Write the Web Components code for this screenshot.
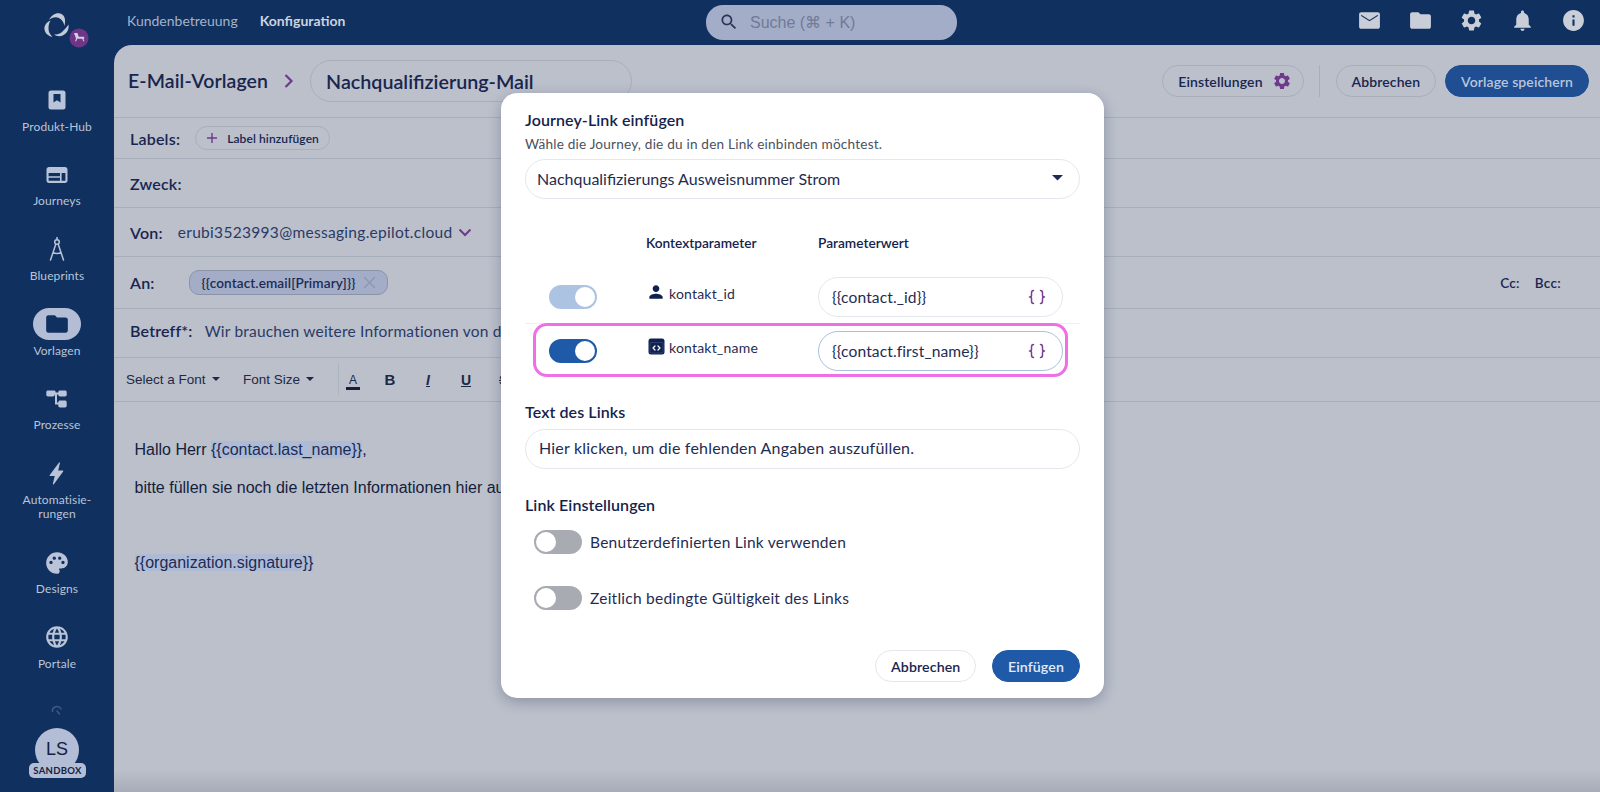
<!DOCTYPE html>
<html lang="de">
<head>
<meta charset="utf-8">
<title>E-Mail-Vorlagen</title>
<style>
  html, body { margin: 0; height: 100%; overflow: hidden; background: #10305f; }
  body { font-family: Lato, "Open Sans", sans-serif; color: #18264f; }
</style>
</head>
<body>
<app-shell></app-shell>

<script>
// material style icon paths, all on a 24 box
const ICONS = {
  mail: 'M20 4H4c-1.1 0-2 .9-2 2v12c0 1.1.9 2 2 2h16c1.1 0 2-.9 2-2V6c0-1.1-.9-2-2-2zm0 3.6l-8 5-8-5V6.4l8 5 8-5v1.2z',
  folder: 'M10 4H4c-1.1 0-1.99.9-1.99 2L2 18c0 1.1.9 2 2 2h16c1.1 0 2-.9 2-2V8c0-1.1-.9-2-2-2h-8l-2-2z',
  gear: 'M19.14 12.94c.04-.3.06-.61.06-.94 0-.32-.02-.64-.07-.94l2.03-1.58c.18-.14.23-.41.12-.61l-1.92-3.32c-.12-.22-.37-.29-.59-.22l-2.39.96c-.5-.38-1.03-.7-1.62-.94l-.36-2.54c-.04-.24-.24-.41-.48-.41h-3.84c-.24 0-.43.17-.47.41l-.36 2.54c-.59.24-1.13.57-1.62.94l-2.39-.96c-.22-.08-.47 0-.59.22L2.74 8.87c-.12.21-.08.47.12.61l2.03 1.58c-.05.3-.09.63-.09.94s.02.64.07.94l-2.03 1.58c-.18.14-.23.41-.12.61l1.92 3.32c.12.22.37.29.59.22l2.39-.96c.5.38 1.03.7 1.62.94l.36 2.54c.05.24.24.41.48.41h3.84c.24 0 .44-.17.47-.41l.36-2.54c.59-.24 1.13-.56 1.62-.94l2.39.96c.22.08.47 0 .59-.22l1.92-3.32c.12-.22.07-.47-.12-.61l-2.01-1.58zM12 15.6c-1.98 0-3.6-1.62-3.6-3.6s1.62-3.6 3.6-3.6 3.6 1.62 3.6 3.6-1.62 3.6-3.6 3.6z',
  bell: 'M12 22c1.1 0 2-.9 2-2h-4c0 1.1.9 2 2 2zm6-6v-5c0-3.07-1.63-5.64-4.5-6.32V4c0-.83-.67-1.5-1.5-1.5s-1.5.67-1.5 1.5v.68C7.64 5.36 6 7.92 6 11v5l-2 2v1h16v-1l-2-2z',
  info: 'M12 2C6.48 2 2 6.48 2 12s4.48 10 10 10 10-4.48 10-10S17.52 2 12 2zm1 15h-2v-6h2v6zm0-8h-2V7h2v2z',
  search: 'M15.5 14h-.79l-.28-.27C15.41 12.59 16 11.11 16 9.5 16 5.91 13.09 3 9.5 3S3 5.91 3 9.5 5.91 16 9.5 16c1.61 0 3.09-.59 4.23-1.57l.27.28v.79l5 4.99L20.49 19l-4.99-5zm-6 0C7.01 14 5 11.99 5 9.5S7.01 5 9.5 5 14 7.01 14 9.5 11.99 14 9.5 14z',
  person: 'M12 12c2.21 0 4-1.79 4-4s-1.79-4-4-4-4 1.79-4 4 1.79 4 4 4zm0 2c-2.67 0-8 1.34-8 4v2h16v-2c0-2.66-5.33-4-8-4z',
  palette: 'M12 2C6.49 2 2 6.49 2 12s4.49 10 10 10c1.38 0 2.5-1.12 2.5-2.5 0-.61-.23-1.2-.64-1.67-.08-.1-.13-.21-.13-.33 0-.28.22-.5.5-.5H16c3.31 0 6-2.69 6-6 0-4.96-4.49-9-10-9zm5.5 11c-.83 0-1.5-.67-1.5-1.5s.67-1.5 1.5-1.5 1.5.67 1.5 1.5-.67 1.5-1.5 1.5zm-3-4c-.83 0-1.5-.67-1.5-1.5S13.67 6 14.5 6s1.5.67 1.5 1.5S15.33 9 14.5 9zM5 11.5c0-.83.67-1.5 1.5-1.5s1.5.67 1.5 1.5S7.33 13 6.5 13 5 12.33 5 11.5zm6-4c0 .83-.67 1.5-1.5 1.5S8 8.33 8 7.5 8.67 6 9.5 6s1.5.67 1.5 1.5z',
  globe: 'M11.99 2C6.47 2 2 6.48 2 12s4.47 10 9.99 10C17.52 22 22 17.52 22 12S17.52 2 11.99 2zm6.93 6h-2.95c-.32-1.25-.78-2.45-1.38-3.56 1.84.63 3.37 1.91 4.33 3.56zM12 4.04c.83 1.2 1.48 2.53 1.91 3.96h-3.82c.43-1.43 1.08-2.76 1.91-3.96zM4.26 14C4.1 13.36 4 12.69 4 12s.1-1.36.26-2h3.38c-.08.66-.14 1.32-.14 2s.06 1.34.14 2H4.26zm.82 2h2.95c.32 1.25.78 2.45 1.38 3.56-1.84-.63-3.37-1.9-4.33-3.56zm2.95-8H5.08c.96-1.66 2.49-2.93 4.33-3.56C8.81 5.55 8.35 6.75 8.03 8zM12 19.96c-.83-1.2-1.48-2.53-1.91-3.96h3.82c-.43 1.43-1.08 2.76-1.91 3.96zM14.34 14H9.66c-.09-.66-.16-1.32-.16-2s.07-1.35.16-2h4.68c.09.65.16 1.32.16 2s-.07 1.34-.16 2zm.25 5.56c.6-1.11 1.06-2.31 1.38-3.56h2.95c-.96 1.65-2.49 2.93-4.33 3.56zM16.36 14c.08-.66.14-1.32.14-2s-.06-1.34-.14-2h3.38c.16.64.26 1.31.26 2s-.1 1.36-.26 2h-3.38z',
  book: 'M6 2.5h12a2.5 2.5 0 0 1 2.5 2.5v14a2.5 2.5 0 0 1-2.5 2.5H6A2.5 2.5 0 0 1 3.500 19V5A2.500 2.500 0 0 1 6 2.500zM8.500 6v8.500l3.500-2.300 3.500 2.300V6z',
  web: 'M4 4h16c1.400 0 2.500 1.100 2.500 2.500v11c0 1.400-1.100 2.500-2.500 2.500H4c-1.400 0-2.500-1.100-2.500-2.500v-11C1.500 5.100 2.600 4 4 4zm-.400 6v3.200h11.400V10zm0 4.700v3.100h11.400v-3.100zM16.600 10v7.800h3.800V10z',
  flow: 'M3 3.500h6c1 0 1.700.700 1.700 1.700v.300h2.600V5.200c0-1 .700-1.700 1.700-1.700h5c1 0 1.700.700 1.700 1.700v2.600c0 1-.700 1.700-1.700 1.700h-5c-1 0-1.700-.700-1.700-1.700V7.500h-1.300v8h1.300v-.300c0-1 .700-1.700 1.700-1.700h5c1 0 1.700.700 1.700 1.700v3.600c0 1-.700 1.700-1.700 1.700h-5c-1 0-1.700-.700-1.700-1.700v-1.300h-3.300V7.500h-.300v.300c0 1-.700 1.700-1.700 1.700H3c-1 0-1.700-.700-1.700-1.700V5.200c0-1 .700-1.700 1.700-1.700z',
  bolt: 'M14.500 1.500 5.500 13.500c-.300.500 0 1 .500 1h4.300l-1.800 7.300c-.200.700.500 1 .900.500l9-12.300c.300-.500 0-1-.500-1h-4.300l1.700-7c.200-.700-.500-1-.800-.500z'
}

function icon(name, size, color) {
  return `<svg width="${size}" height="${size}" viewBox="0 0 24 24" fill="${color || 'currentColor'}" fill-rule="evenodd" aria-hidden="true"><path d="${ICONS[name]}"/></svg>`
}

const compass = `<svg width="24" height="24" viewBox="0 0 24 24" fill="none" stroke="currentColor" stroke-width="1.500" stroke-linecap="round" aria-hidden="true"><path d="M12 .5v2"/><circle cx="12" cy="5" r="2.300"/><path d="M10.700 7.500 5.500 23M13.300 7.500 18.500 23M8 15.500c2.400 1.200 5.600 1.200 8 0"/></svg>`
const braces = `<svg width="18" height="16" viewBox="0 0 18 16" fill="none" stroke="#7b3f96" stroke-width="1.500" stroke-linecap="round" stroke-linejoin="round" aria-hidden="true"><path d="M5.500 1.500C3.500 1.500 3.500 2.500 3.500 4v2.500c0 .8-.6 1.500-2 1.500 1.400 0 2 .7 2 1.500V12c0 1.500 0 2.500 2 2.500M12.500 1.500c2 0 2 1 2 2.500v2.500c0 .8.600 1.500 2 1.500-1.400 0-2 .7-2 1.500V12c0 1.500 0 2.500-2 2.500"/></svg>`
const codebox = `<svg width="17" height="17" viewBox="0 0 17 17" aria-hidden="true"><rect x=".5" y=".5" width="16" height="16" rx="2.500" fill="#0f2150"/><rect x="2" y="4.500" width="13" height="10.500" rx="1" fill="#0f2150" stroke="#fff" stroke-width=".4" stroke-opacity=".35"/><path d="M7 8 5 10l2 2M10 8l2 2-2 2" fill="none" stroke="#fff" stroke-width="1.200" stroke-linecap="round" stroke-linejoin="round"/></svg>`
const caret = (c, w) => `<svg width="${w}" height="${w / 2}" viewBox="0 0 10 5" aria-hidden="true"><path d="M0 0h10L5 5z" fill="${c}"/></svg>`

class NavItem extends HTMLElement {
  constructor() {
    super()
    this.attachShadow({mode: 'open'}).innerHTML = `
    <style>
      :host { display: flex; flex-direction: column; align-items: center; color: #b9c4d8; }
      .ic { width: 48px; height: 32px; border-radius: 16px; display: flex; align-items: center; justify-content: center; }
      :host([active]) .ic { background: #b3bdd6; color: #10305f; }
      .lb { margin-top: 3.5px; font-size: 12px; line-height: 14.5px; letter-spacing: .1px; text-align: center; white-space: pre-line; }
    </style>
    <div class="ic"><slot></slot></div>
    <div class="lb">${this.getAttribute('label')}</div>`
  }
}
customElements.define('nav-item', NavItem)

class SideBar extends HTMLElement {
  constructor() {
    super()
    this.attachShadow({mode: 'open'}).innerHTML = `
    <style>
      :host { display: flex; flex-direction: column; align-items: center; width: 114px; flex: none; background: #10305f; box-sizing: border-box; height: 792px; }
      .logo { height: 84px; width: 100%; display: flex; justify-content: center; flex: none; }
      .logo svg { margin-top: 12px; }
      nav { display: flex; flex-direction: column; gap: 24.700px; align-items: center; }
      .spin { margin-top: auto; height: 12px; margin-bottom: 15px; }
      .who { position: relative; width: 44px; height: 44px; margin-bottom: 20px; border-radius: 50%; background: #b3bdd6; color: #14213f; font: 400 18px/42px "Liberation Sans", sans-serif; text-align: center; flex: none; }
      .tag { position: absolute; left: -6px; top: 35px; width: 57px; height: 15px; border-radius: 5px; background: #b3bdd6; font: 700 9.500px/15px Lato, sans-serif; letter-spacing: .3px; color: #14213f; }
    </style>
    <div class="logo">
      <svg width="78" height="40" viewBox="0 0 78 40" aria-hidden="true">
        <g fill="#c3cad8">
          <path d="M31 8C33.500 3 38 .5 42 1.500c4.500 1 6 5.500 4.500 12.500C45.500 9.500 43 6 39 5.500 36 5 33.500 6 31 8z"/>
          <path d="M50.500 12.500C51.500 18 48 23 43 24c-2.500.500-5 0-7-1.500 3.500.500 7-1 9-3.500 2-2 4-4 5.500-6.500z"/>
          <path d="M32.500 8.500C28 10.500 26 14 26.500 17.500c.500 3.500 3.500 6.500 8 7.500-3-3-4-5.500-4-8.500 0-3 .500-5.500 2-8z"/>
        </g>
        <circle cx="61" cy="26" r="9.500" fill="#6e3589"/>
        <path d="M56.500 21h3l1.200 3.800h5.500v2h-.8l1 2.500h-1.200l-1-2.500h-5l-1 2.500h-1.200l1-2.500-1.300-4.300h-1z" fill="#d5cfe0"/>
      </svg>
    </div>
    <nav>
      <nav-item label="Produkt-Hub">${icon('book', 24)}</nav-item>
      <nav-item label="Journeys">${icon('web', 24)}</nav-item>
      <nav-item label="Blueprints">${compass}</nav-item>
      <nav-item label="Vorlagen" active>${icon('folder', 26)}</nav-item>
      <nav-item label="Prozesse">${icon('flow', 24)}</nav-item>
      <nav-item label="Automatisie-&#10;rungen">${icon('bolt', 25)}</nav-item>
      <nav-item label="Designs">${icon('palette', 26)}</nav-item>
      <nav-item label="Portale">${icon('globe', 26)}</nav-item>
    </nav>
    <div class="spin"><svg width="12" height="12" viewBox="0 0 12 12" fill="none" stroke="#3d5a84" stroke-width="1.500" stroke-linecap="round"><path d="M1.500 6.500A4.500 4.500 0 0 1 10 4M6 6l2.500 3"/></svg></div>
    <div class="who">LS<div class="tag">SANDBOX</div></div>`
  }
}
customElements.define('side-bar', SideBar)

class TopBar extends HTMLElement {
  constructor() {
    super()
    this.attachShadow({mode: 'open'}).innerHTML = `
    <style>
      :host { display: grid; grid-template-columns: 579px 251px 1fr; align-items: center; height: 45px; box-sizing: border-box; padding: 0 14px 4px 13px; color: #c3cad8; font-size: 14px; }
      .tabs { display: flex; gap: 22px; color: #a6b2c8; }
      b { font-weight: 700; color: #ccd3df; }
      .search { height: 35px; border-radius: 17px; background: #a3adc8; display: flex; align-items: center; gap: 11px; padding-left: 13px; box-sizing: border-box; color: #707b98; font: 16px "Liberation Sans", sans-serif; margin-top: 3px; }
      .search svg { color: #2a3557; }
      .acts { display: flex; justify-content: flex-end; gap: 26px; color: #c9ced9; }
    </style>
    <div class="tabs"><span>Kundenbetreuung</span><b>Konfiguration</b></div>
    <div class="search">${icon('search', 20)}<span>Suche (⌘ + K)</span></div>
    <div class="acts">${icon('mail', 25)}${icon('folder', 25)}${icon('gear', 25)}${icon('bell', 25)}${icon('info', 25)}</div>`
  }
}
customElements.define('top-bar', TopBar)

class PillButton extends HTMLElement {
  constructor() {
    super()
    this.attachShadow({mode: 'open'}).innerHTML = `
    <style>
      :host { display: inline-flex; align-items: center; justify-content: center; gap: 9px; box-sizing: border-box; height: 32px; padding: 0 15px; border-radius: 16px; border: 1px solid var(--line, #a9aebc); font-size: var(--fs, 14px); font-weight: 600; letter-spacing: .1px; color: #18264f; white-space: nowrap; }
      :host([primary]) { background: var(--fill, #1f4f92); border-color: var(--fill, #1f4f92); color: var(--ink, #b9c6dc); }
    </style>
    <slot></slot>`
  }
}
customElements.define('pill-button', PillButton)

class FieldRow extends HTMLElement {
  constructor() {
    super()
    this.attachShadow({mode: 'open'}).innerHTML = `
    <style>
      :host { display: flex; align-items: center; box-sizing: border-box; height: var(--h, 49px); padding: 0 15px var(--pb, 0) 16px; border-bottom: 1px solid #a9aebc; flex: none; }
      .k { font-size: 16px; font-weight: 600; color: #18264f; letter-spacing: .2px; margin-right: var(--gap, 0); white-space: nowrap; }
      .v { display: flex; align-items: center; flex: 1; min-width: 0; font-size: 15.500px; letter-spacing: var(--ls, .3px); color: #2a3a66; white-space: nowrap; }
    </style>
    <span class="k">${this.getAttribute('label')}</span><div class="v"><slot></slot></div>`
  }
}
customElements.define('field-row', FieldRow)

class EditorBar extends HTMLElement {
  constructor() {
    super()
    this.attachShadow({mode: 'open'}).innerHTML = `
    <style>
      :host { display: flex; align-items: center; height: 43.500px; box-sizing: border-box; padding-left: 12px; border-bottom: 1px solid #a9aebc; color: #1d2846; font-size: 13.500px; flex: none; white-space: nowrap; }
      .sel { display: flex; align-items: center; gap: 6px; font-family: "Liberation Sans", sans-serif; }
      .sep { width: 1px; height: 32px; background: #aeb3c0; margin-right: -5px; }
      .t { width: 38px; text-align: center; font: 700 15px "Liberation Sans", sans-serif; }
      .a { border-bottom: 3.500px solid #14203c; font-weight: 400; font-size: 12px; width: 14px; margin-bottom: -2px; }
      .i { font-style: italic; text-decoration: underline; font-size: 14px; }
      .u { text-decoration: underline; font-size: 14px; }
      .t span { display: inline-block; line-height: 14px; }
    </style>
    <div class="sel" style="width:117px">Select a Font ${caret('#1d2846', 8)}</div>
    <div class="sel" style="width:95px">Font Size ${caret('#1d2846', 8)}</div>
    <div class="sep"></div>
    <div class="t"><span class="a">A</span></div>
    <div class="t" style="margin-left:-1px">B</div>
    <div class="t"><span class="i">I</span></div>
    <div class="t"><span class="u">U</span></div>
    <div class="t"><s>S</s></div>`
  }
}
customElements.define('editor-bar', EditorBar)

class ToggleSwitch extends HTMLElement {
  constructor() {
    super()
    this.attachShadow({mode: 'open'}).innerHTML = `
    <style>
      :host { display: flex; width: 48px; height: 24px; box-sizing: border-box; border-radius: 12px; border: 2px solid #a9abb3; background: #a9abb3; flex: none; }
      :host([on]) { border-color: #1f5aa8; background: #1f5aa8; justify-content: flex-end; }
      :host([on][soft]) { border-color: #adc3e2; background: #adc3e2; }
      i { width: 20px; height: 20px; border-radius: 50%; background: #fff; }
    </style><i></i>`
  }
}
customElements.define('toggle-switch', ToggleSwitch)

class ParamRow extends HTMLElement {
  constructor() {
    super()
    const focus = this.hasAttribute('focus')
    this.attachShadow({mode: 'open'}).innerHTML = `
    <style>
      :host { display: grid; grid-template-columns: 97px 172px 245px; align-items: center; padding-left: 24px; height: 54px; box-sizing: border-box; }
      .name { display: flex; align-items: center; gap: 4px; font-size: 14px; letter-spacing: .2px; color: #1f2c52; margin-top: -6px; }
      .ic { width: 18px; display: flex; justify-content: center; color: #0f2150; margin-left: 1px; }
      .box { display: flex; align-items: center; justify-content: space-between; height: 40px; box-sizing: border-box; border: 1px solid ${focus ? '#a9c1e0' : '#e4e8ee'}; border-radius: 20px; padding: 0 16px 0 13px; font-size: 15.600px; color: #1f2c52; letter-spacing: .1px; }
    </style>
    <slot name="sw"></slot>
    <div class="name"><span class="ic"><slot name="ic"></slot></span>${this.getAttribute('name')}</div>
    <div class="box"><span>${this.getAttribute('value')}</span>${braces}</div>`
  }
}
customElements.define('param-row', ParamRow)

class LinkDialog extends HTMLElement {
  constructor() {
    super()
    this.attachShadow({mode: 'open'}).innerHTML = `
    <style>
      :host { position: absolute; left: 501px; top: 93px; width: 603px; height: 605px; box-sizing: border-box; padding: 16px 24px 16px 24px; background: #fff; border-radius: 16px; box-shadow: 0 4px 14px rgba(20,30,60,.28); color: #14234d; display: flex; flex-direction: column; }
      h2, h3 { margin: 0; font-size: 16px; line-height: 22px; font-weight: 600; letter-spacing: .1px; }
      .sub { font-size: 13.600px; line-height: 18px; color: #4a5160; letter-spacing: .2px; margin-top: 4px; }
      .inp { height: 40px; box-sizing: border-box; border: 1px solid #e4e8ee; border-radius: 20px; display: flex; align-items: center; font-size: 16px; letter-spacing: .2px; color: #1f2c52; flex: none; padding-bottom: 2px; }
      .sel { margin-top: 6px; justify-content: space-between; padding: 0 16px 2px 11px; letter-spacing: 0; }
      .head { display: grid; grid-template-columns: 172px 1fr; padding-left: 121px; margin: 34px 0 0; font-size: 13.700px; font-weight: 600; line-height: 20px; }
      .rows { margin-top: 17.500px; position: relative; display: flex; flex-direction: column; }
      .rows param-row:first-child { border-bottom: 1px solid #eef0f4; height: 53px; }
      .mark { position: absolute; left: 8px; top: 52px; width: 535px; height: 54px; box-sizing: border-box; border: 3px solid #ee6fe6; border-radius: 14px; pointer-events: none; }
      .txt { margin-top: 6px; padding-left: 13px; }
      .opt { display: flex; align-items: center; gap: 8px; height: 24px; padding-left: 9px; font-size: 15.500px; letter-spacing: .25px; color: #1f2c52; }
      .foot { margin-top: auto; display: flex; justify-content: flex-end; gap: 15.500px; --line: #e4e8ee; --fill: #1f5aa8; --ink: #e3ebf6; --fs: 14.200px; }
    </style>
    <h2>Journey-Link einfügen</h2>
    <div class="sub">Wähle die Journey, die du in den Link einbinden möchtest.</div>
    <div class="inp sel"><span>Nachqualifizierungs Ausweisnummer Strom</span>${caret('#1f2c52', 11)}</div>
    <div class="head"><span>Kontextparameter</span><span>Parameterwert</span></div>
    <div class="rows">
      <param-row name="kontakt_id" value="{{contact._id}}"><toggle-switch slot="sw" on soft></toggle-switch><span slot="ic">${icon('person', 20)}</span></param-row>
      <param-row name="kontakt_name" value="{{contact.first_name}}" focus><toggle-switch slot="sw" on></toggle-switch><span slot="ic">${codebox}</span></param-row>
      <div class="mark"></div>
    </div>
    <h3 style="margin-top:23px">Text des Links</h3>
    <div class="inp txt">Hier klicken, um die fehlenden Angaben auszufüllen.</div>
    <h3 style="margin-top:25px">Link Einstellungen</h3>
    <div class="opt" style="margin-top:14px"><toggle-switch></toggle-switch>Benutzerdefinierten Link verwenden</div>
    <div class="opt" style="margin-top:32px"><toggle-switch></toggle-switch>Zeitlich bedingte Gültigkeit des Links</div>
    <div class="foot"><pill-button>Abbrechen</pill-button><pill-button primary>Einfügen</pill-button></div>`
  }
}
customElements.define('link-dialog', LinkDialog)

class AppShell extends HTMLElement {
  constructor() {
    super()
    this.attachShadow({mode: 'open'}).innerHTML = `
    <style>
      :host { display: flex; position: relative; width: 1600px; height: 792px; overflow: hidden; }
      main { flex: 1; min-width: 0; display: flex; flex-direction: column; }
      .page { flex: 1; background: linear-gradient(#bbc0cb 0, #bbc0cb 97%, #a7acb8 100%); border-top-left-radius: 18px; display: flex; flex-direction: column; overflow: hidden; }
      .head { display: flex; align-items: center; height: 73px; padding: 0 11px 0 14px; border-bottom: 1px solid #a9aebc; box-sizing: border-box; flex: none; }
      .crumb { font-size: 19.500px; font-weight: 600; color: #18264f; letter-spacing: .1px; margin-top: -2px; }
      .title { width: 322px; height: 42px; margin: 0 0 0 15px; box-sizing: border-box; border: 1px solid #a9aebc; border-radius: 21px; padding: 0 15px; display: flex; align-items: center; font-size: 19.700px; font-weight: 600; color: #18264f; }
      .right { margin-left: auto; display: flex; align-items: center; gap: 9px; }
      .bar { width: 1px; height: 32px; background: #a9aebc; margin: 0 7px 0 6px; }
      .chip { display: flex; align-items: center; gap: 9px; border: 1px solid #a9aebc; border-radius: 12px; height: 24px; box-sizing: border-box; padding: 0 10px; font-size: 12px; font-weight: 600; color: #18264f; letter-spacing: .1px; }
      .to { background: #a3adc8; border-color: #8a93a8; border-radius: 10px; height: 25px; padding: 0 11px 0 12px; font-size: 13.600px; color: #1d2b55; gap: 8px; }
      .cc { margin-left: auto; margin-right: 24px; display: flex; gap: 15px; font-size: 13.500px; font-weight: 600; color: #18264f; }
      .body { padding: 37px 20.500px; font: 16px/22px "Liberation Sans", sans-serif; color: #14203c; white-space: nowrap; }
      .body p { margin: 0 0 16px; }
      mark { background: #aebbd6; color: #1d2b55; }
      .body .sig { margin-top: 53.500px; }
    </style>
    <side-bar></side-bar>
    <main>
      <top-bar></top-bar>
      <section class="page">
        <div class="head">
          <span class="crumb">E-Mail-Vorlagen</span>
          <svg width="12" height="16" viewBox="0 0 12 16" style="margin-left:15px" fill="none" stroke="#6f3a8c" stroke-width="2.200"><path d="M2.500 2l6 6-6 6"/></svg>
          <div class="title">Nachqualifizierung-Mail</div>
          <div class="right">
            <pill-button style="padding-right:11px">Einstellungen ${icon('gear', 20, '#6f3a8c')}</pill-button>
            <span class="bar"></span>
            <pill-button>Abbrechen</pill-button>
            <pill-button primary>Vorlage speichern</pill-button>
          </div>
        </div>
        <field-row label="Labels:" style="--h:41px;--gap:15px"><div class="chip"><svg width="12" height="12" viewBox="0 0 12 12" stroke="#6f3a8c" stroke-width="1.400"><path d="M6 1v10M1 6h10"/></svg>Label hinzufügen</div></field-row>
        <field-row label="Zweck:"></field-row>
        <field-row label="Von:" style="--gap:15px">erubi3523993@messaging.epilot.cloud<svg width="14" height="9" viewBox="0 0 14 9" style="margin-left:5px" fill="none" stroke="#6f3a8c" stroke-width="2"><path d="M1.500 1.500 7 7l5.500-5.500"/></svg></field-row>
        <field-row label="An:" style="--h:52px;--gap:34px"><div class="chip to">{{contact.email[Primary]}}<svg width="13" height="13" viewBox="0 0 13 13" stroke="#8d96ab" stroke-width="1.300" stroke-linecap="round"><path d="M1.500 1.500l10 10M11.500 1.500l-10 10"/></svg></div><div class="cc"><span>Cc:</span><span>Bcc:</span></div></field-row>
        <field-row label="Betreff*:" style="--gap:12px;--pb:5px;--ls:.2px">Wir brauchen weitere Informationen von dir</field-row>
        <editor-bar></editor-bar>
        <div class="body">
          <p>Hallo Herr <mark>{{contact.last_name}}</mark>,</p>
          <p>bitte füllen sie noch die letzten Informationen hier aus</p>
          <p class="sig"><mark>{{organization.signature}}</mark></p>
        </div>
      </section>
    </main>
    <link-dialog></link-dialog>`
  }
}
customElements.define('app-shell', AppShell)
</script>
</body>
</html>
